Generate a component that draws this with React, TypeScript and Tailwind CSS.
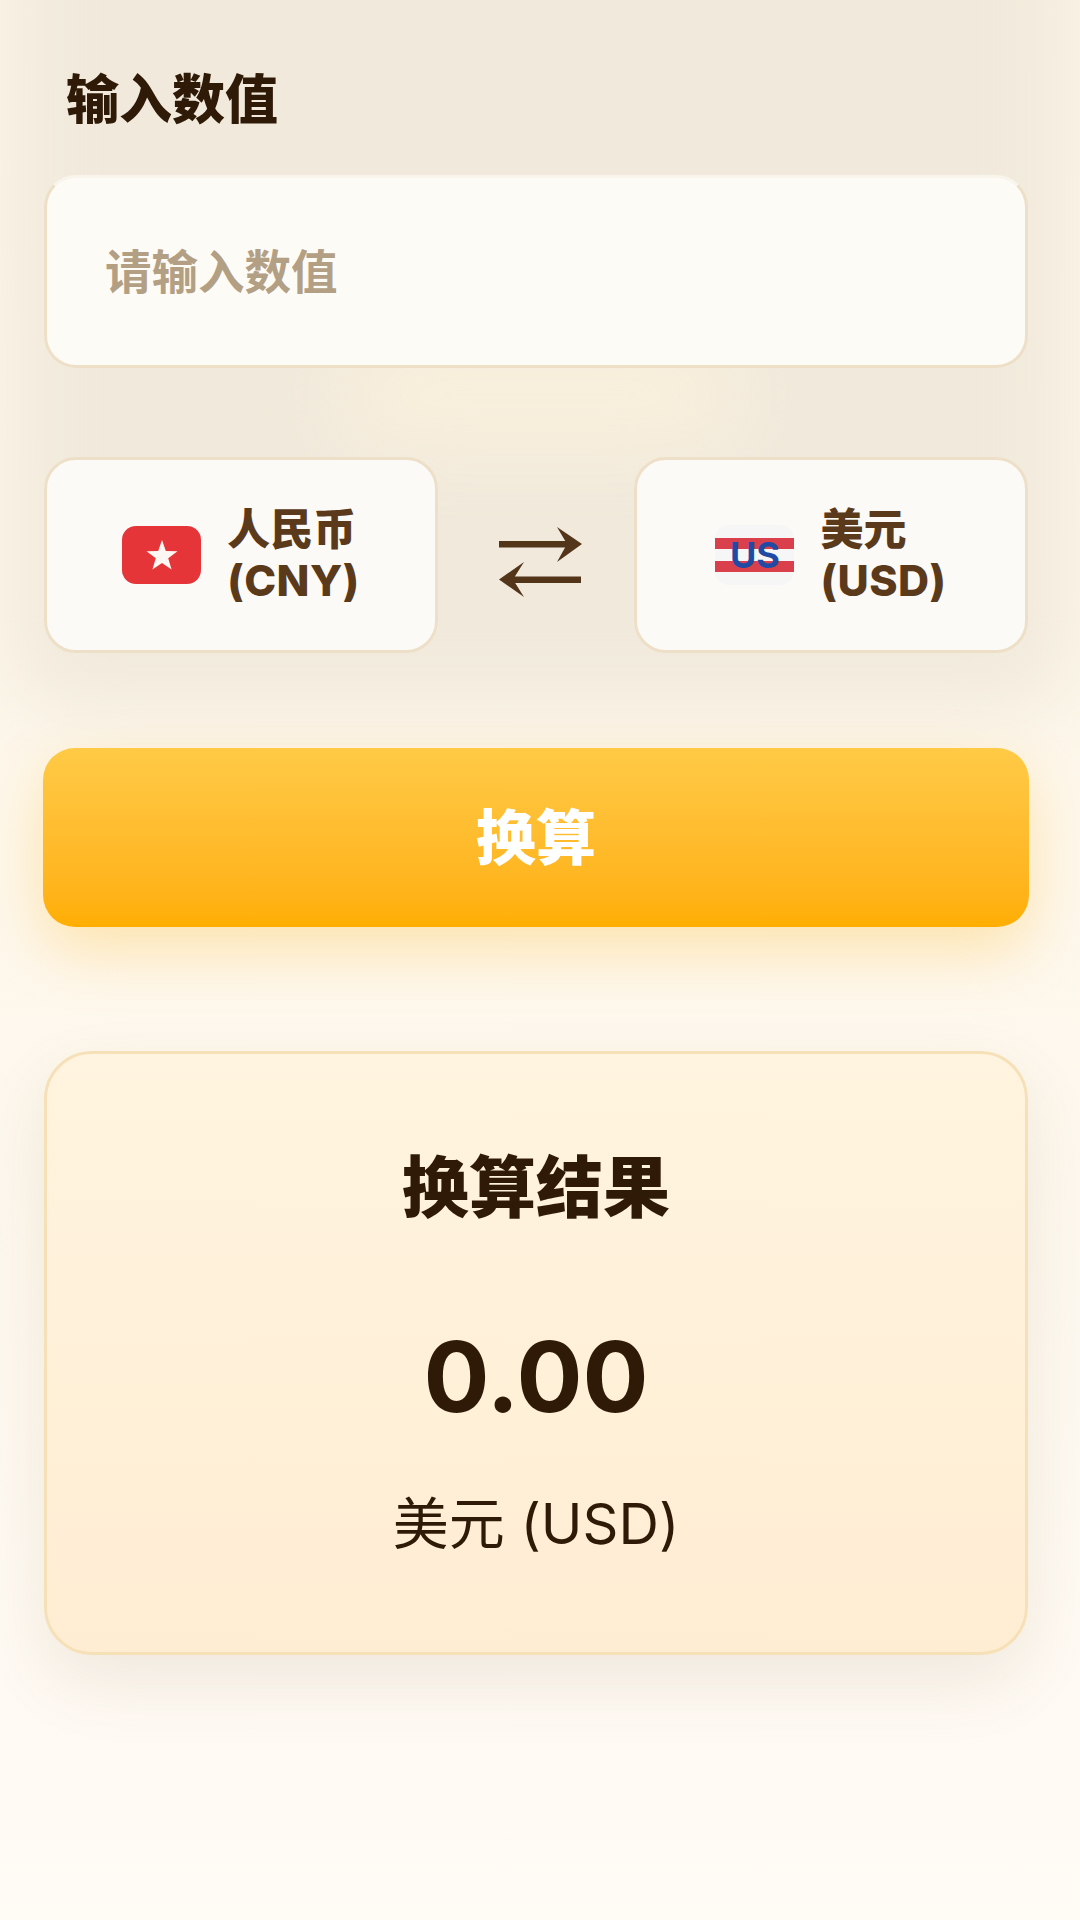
import React from 'react';

const fontStack = 'font-[Inter,"Noto_Sans_CJK_SC",sans-serif]';

function CnyFlag() {
  return (
    <div className="flex h-[58px] w-[79px] shrink-0 items-center justify-center rounded-[14px] bg-[#e53539]">
      <svg width="32" height="31" viewBox="0 0 32 31">
        <polygon points="16,0 19.8,11 31.5,11.2 22.2,18.3 25.6,29.6 16,23 6.4,29.6 9.8,18.3 0.5,11.2 12.2,11" fill="#fdf7f3" />
      </svg>
    </div>
  );
}

function UsdFlag() {
  return (
    <div className="relative flex h-[60px] w-[79px] shrink-0 flex-col justify-center gap-[12px] rounded-[14px] bg-[#f6f6f6]">
      <div className="h-[11px] bg-[#da3f4c]" />
      <div className="h-[11px] bg-[#da3f4c]" />
      <span className="absolute inset-0 flex items-center justify-center text-[36px] leading-none font-bold text-[#1f4ba5]">US</span>
    </div>
  );
}

function CurrencyCard({ flag, name, code }: { flag: React.ReactNode; name: string; code: string }) {
  return (
    <div className="flex h-[196px] w-[394px] items-center justify-center gap-[26px] rounded-[32px] border-[3px] border-[#eee0c8] bg-[#fcfaf7]">
      {flag}
      <div className="text-[43px] leading-[51px] font-extrabold text-[#5a3a1a]">
        <div>{name}</div>
        <div className="tracking-[0.5px]">{code}</div>
      </div>
    </div>
  );
}

function SwapIcon() {
  return (
    <svg className="mt-[13px] ml-[61px]" width="83" height="70" viewBox="19 21 83 70" fill="#53351a">
      <rect x="19" y="35" width="72" height="6.5" />
      <polygon points="77,21 102,38 77,56 87,38" />
      <rect x="30" y="70.5" width="71" height="6.5" />
      <polygon points="44,56 19,73.5 44,91 33,73.5" />
    </svg>
  );
}

export default function App() {
  return (
    <div className={`${fontStack} relative min-h-[1920px] overflow-hidden bg-gradient-to-b from-[#fdf6e8] via-[#fdf7eb] via-45% to-[#fffbf5] pt-[67px] pr-[52px] pl-[44px]`}>
      {/* soft grey haze behind the form */}
      <div className="absolute top-[-100px] right-[10px] left-[10px] h-[810px] rounded-[60px] bg-[#f1eadc] blur-[36px]" />
      <div className="absolute top-[340px] left-[340px] h-[110px] w-[400px] rounded-full bg-[#f9efdc] blur-[40px]" />

      <div className="relative">
        <h2 className="ml-[22px] text-[53px] leading-[66px] font-black text-[#2f1a08]">输入数值</h2>

        <div className="mt-[42px] flex h-[193px] items-center rounded-[32px] border-[3px] border-[#eee0c8] border-t-[#f9f5ec] bg-[#fdfbf6] pt-[3px] pl-[58px] text-[46.5px] font-bold text-[#b3a084]">
          请输入数值
        </div>

        <div className="mt-[89px] flex items-center">
          <CurrencyCard flag={<CnyFlag />} name="人民币" code="(CNY)" />
          <SwapIcon />
          <div className="ml-auto">
            <CurrencyCard flag={<UsdFlag />} name="美元" code="(USD)" />
          </div>
        </div>

        <button className="-mx-px mt-[95px] flex h-[179px] w-[calc(100%+2px)] items-center justify-center rounded-[32px] bg-gradient-to-b from-[#ffca45] to-[#ffae00] text-[60px] font-black text-white shadow-[0_24px_60px_rgba(255,174,0,0.26)]">
          换算
        </button>

        <div className="mt-[124px] flex h-[604px] flex-col items-center rounded-[48px] border-[3px] border-[#f6e0b8] bg-gradient-to-b from-[#fff4df] to-[#ffedd3] shadow-[0_28px_70px_rgba(90,60,20,0.09)]">
          <div className="mt-[92px] text-[67px] leading-[84px] font-extrabold text-[#2f1a08]">换算结果</div>
          <div className="mt-[87px] text-[98px] leading-[120px] font-bold text-[#2f1a08]">0.00</div>
          <div className="mt-[49px] text-[56px] leading-[76px] font-normal text-[#2f1a08]">美元 (USD)</div>
        </div>
      </div>
    </div>
  );
}
